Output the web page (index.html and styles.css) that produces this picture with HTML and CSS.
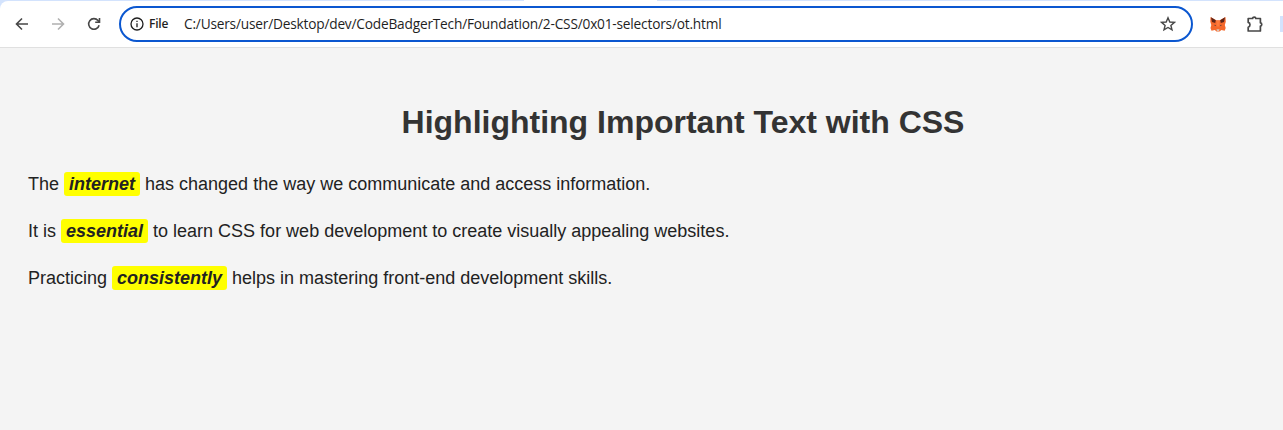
FILE: index.html
```html
<!DOCTYPE html>
<html lang="en">
<head>
<meta charset="utf-8">
<title>Highlighting Important Text with CSS</title>
<link rel="stylesheet" href="styles.css">
</head>
<body>
<header class="browser">
  <div class="tabstrip"><span class="strip-left"></span><span class="strip-gap"></span><span class="strip-right"></span></div>
  <div class="toolbar">
    <svg class="icon back" viewBox="0 0 16 16"><path d="M14 8H3M8 2.5 2.5 8 8 13.5" /></svg>
    <svg class="icon forward" viewBox="0 0 16 16"><path d="M2 8h11M8 2.5 13.5 8 8 13.5" /></svg>
    <svg class="icon reload" viewBox="0 0 16 16"><path d="M13.1 9.2A5.3 5.3 0 1 1 12 4.5l1.3 1.4M13.5 2v4.3H9.2" /></svg>
    <div class="omnibox">
      <svg class="info" viewBox="0 0 14 14"><circle cx="7" cy="7" r="6" /><path d="M7 6.2V10.2M7 3.7V5.1" /></svg>
      <span class="scheme">File</span>
      <span class="url">C:/Users/user/Desktop/dev/CodeBadgerTech/Foundation/2-CSS/0x01-selectors/ot.html</span>
      <svg class="star" viewBox="0 0 16 16"><path d="M8 1.8 9.8 6l4.6.4-3.5 3 1.1 4.5L8 11.5l-4 2.4 1.1-4.5-3.5-3L6.2 6Z" /></svg>
    </div>
    <svg class="fox" viewBox="0 0 16 16">
      <path fill="#f5682b" d="M.5 1 6.3 4.3h3.4L15.5 1l.3 4.8-1 3.2.9 3-1 2.8-3.3-.7L9.5 15.5h-3l-1.7-1.4-3.3.7-1-2.8.8-3-1-3.2Z" />
      <path fill="#5c2519" d="M1 1.3 5.8 4.3 5.2 7 2 6ZM15 1.3l-4.8 3 .6 2.7L14 6Z" />
      <path fill="#ff7a3c" d="M6.3 4.8h3.4l-.4 5.7H6.7Z" />
      <path fill="#39383e" d="m4.6 8.7 1.6.9-1.4.4ZM11.4 8.7l-1.6.9 1.4.4Z" />
      <path fill="#d8c5b9" d="M6.5 13.2h3l-.4 1.8H6.9Z" />
    </svg>
    <svg class="puzzle" viewBox="0 0 18 18"><path d="M2.2 3.5H6.6C6.6 1.7 9.8 1.7 9.8 3.5H14.4V7.8C16.2 7.8 16.2 11 14.4 11V16H2.2V12.2C4.6 11.6 4.6 8 2.2 7.4Z" /></svg>
    <span class="divider"></span>
  </div>
</header>
<main class="page">
  <h1 class="title">Highlighting Important Text with CSS</h1>
  <p class="line">The <em class="highlight">internet</em> has changed the way we communicate and access information.</p>
  <p class="line">It is <em class="highlight">essential</em> to learn CSS for web development to create visually appealing websites.</p>
  <p class="line">Practicing <em class="highlight">consistently</em> helps in mastering front-end development skills.</p>
</main>
</body>
</html>
```

FILE: styles.css
```css
* { box-sizing: border-box; }
html { overflow: hidden; background: #f4f4f4; }
body { margin: 0; background: #f4f4f4; }
svg { display: block; flex: none; fill: none; }

.browser {
  height: 48px;
  background: linear-gradient(#d3e3fd 10px, #fff 10px);
  border-bottom: 1px solid #e0e0e0;
}
.tabstrip { display: flex; height: 1px; }
.strip-left { width: 524px; background: #d3e3fd; }
.strip-gap { width: 133px; background: #fff; }
.strip-right { flex: 1; background: #d3e3fd; }
.toolbar {
  display: flex;
  align-items: center;
  height: 46px;
  padding-left: 14px;
  border-top-left-radius: 8px;
  background: #fff;
}
.icon { width: 16px; height: 16px; stroke: #474747; stroke-width: 1.6; }
.forward { margin-left: 20px; stroke: #b0b0b0; }
.reload { margin-left: 20px; }
.omnibox {
  display: flex;
  align-items: center;
  flex: none;
  width: 1074px;
  height: 36px;
  margin-left: 17px;
  padding: 0 15px 0 10px;
  border: 2px solid #0b57d0;
  border-radius: 18px;
  font-family: "Segoe UI", "Open Sans", "Noto Sans", sans-serif;
  color: #1f1f1f;
  white-space: nowrap;
}
.info { width: 14px; height: 14px; margin-left: -1px; margin-right: 1px; stroke: #1f1f1f; stroke-width: 1.3; }
.scheme { width: 35px; margin-left: 4px; padding-bottom: 1px; font-size: 12px; font-weight: 600; letter-spacing: -0.2px; }
.url { padding-bottom: 2px; font-size: 13.7px; letter-spacing: -0.2px; }
.star { width: 16px; height: 16px; margin-left: auto; stroke: #474747; stroke-width: 1.4; }
.fox { width: 16px; height: 16px; margin-left: 17px; }
.puzzle { width: 18px; height: 18px; margin-left: 20px; stroke: #474747; stroke-width: 1.7; stroke-linejoin: round; }
.divider { flex: 1; height: 16px; margin-left: 16px; background: #d3e3fd; }

.page {
  padding: 49px 28px 0;
  font-family: Arial, "Liberation Sans", sans-serif;
  line-height: 1.6;
  color: #222;
}
.title {
  margin: 0 0 22px;
  padding-left: 83px;
  font-size: 32px;
  text-align: center;
  color: #333;
}
.line { margin: 0 0 18px; font-size: 18px; }
.highlight {
  padding: 2px 5px;
  border-radius: 3px;
  background: #ff0;
  font-weight: bold;
}
```
